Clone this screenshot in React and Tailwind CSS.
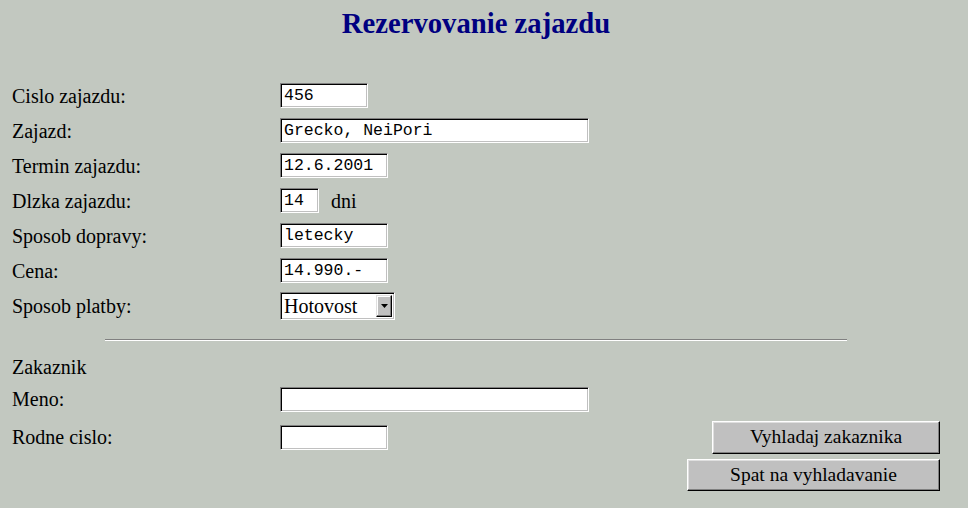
import React from "react";

const serif = { fontFamily: '"Liberation Serif", "Times New Roman", serif' };

function Field({ w, value }) {
  return (
    <div
      className={`${w} h-[25px] bg-white border border-t-[#808080] border-l-[#808080] border-b-white border-r-white shadow-[inset_1px_1px_0_#000,inset_-1px_-1px_0_#c0c0c0] flex items-center pl-[3px] pt-[1px] text-[16.5px] text-black leading-none whitespace-pre overflow-hidden`}
      style={{ fontFamily: '"Liberation Mono", "Courier New", monospace' }}
    >
      {value}
    </div>
  );
}

function Row({ label, children }) {
  return (
    <div className="h-[35px] flex items-center">
      <div className="w-[268px] text-[20px] leading-none">{label}</div>
      {children}
    </div>
  );
}

function Button({ w, h, children }) {
  return (
    <div
      className={`${w} ${h} bg-[#c0c0c0] border border-t-white border-l-white border-b-black border-r-black shadow-[inset_-1px_-1px_0_#808080,inset_1px_1px_0_#dfdfdf] flex items-center justify-center text-[19.5px] leading-none text-black`}
    >
      {children}
    </div>
  );
}

export default function App() {
  return (
    <div className="w-full h-[508px] bg-[#c2c8c0] text-black overflow-hidden" style={serif}>
      <div className="w-[952px] px-3">
        <div className="pt-[8px] text-center text-[28.7px] font-bold text-[#000080] leading-[31px]">
          Rezervovanie zajazdu
        </div>

        <div className="mt-[39px]">
          <Row label="Cislo zajazdu:">
            <Field w="w-[88px]" value="456" />
          </Row>
          <Row label="Zajazd:">
            <Field w="w-[309px]" value="Grecko, NeiPori" />
          </Row>
          <Row label="Termin zajazdu:">
            <Field w="w-[108px]" value="12.6.2001" />
          </Row>
          <Row label="Dlzka zajazdu:">
            <Field w="w-[39px]" value="14" />
            <span className="ml-[12px] text-[20px] leading-none">dni</span>
          </Row>
          <Row label="Sposob dopravy:">
            <Field w="w-[108px]" value="letecky" />
          </Row>
          <Row label="Cena:">
            <Field w="w-[108px]" value="14.990.-" />
          </Row>
          <Row label="Sposob platby:">
            <div className="w-[115px] h-[28px] bg-white border border-t-[#808080] border-l-[#808080] border-b-white border-r-white shadow-[inset_1px_1px_0_#000,inset_-1px_-1px_0_#c0c0c0] flex items-center p-[2px]">
              <span className="flex-1 pl-[1px] text-[20px] leading-none">Hotovost</span>
              <div className="w-[16px] h-[22px] bg-[#c0c0c0] border border-t-[#dfdfdf] border-l-[#dfdfdf] border-b-black border-r-black shadow-[inset_-1px_-1px_0_#808080,inset_1px_1px_0_#fff] flex items-center justify-center">
                <svg width="7" height="4" viewBox="0 0 7 4">
                  <polygon points="0,0 7,0 3.5,4" fill="#000" />
                </svg>
              </div>
            </div>
          </Row>
        </div>

        <div className="mt-[16px] mx-auto w-[742px] h-[2px] border-t border-t-[#808080] border-b border-b-white" />

        <div className="mt-[10px] h-[32px] flex items-center text-[20px] leading-none">Zakaznik</div>
        <div className="h-[32px] flex items-center">
          <div className="w-[268px] text-[20px] leading-none">Meno:</div>
          <Field w="w-[309px]" value="" />
        </div>
        <div className="h-[44px] flex items-center">
          <div className="w-[268px] text-[20px] leading-none">Rodne cislo:</div>
          <Field w="w-[108px]" value="" />
          <div className="ml-auto">
            <Button w="w-[228px]" h="h-[33px]">Vyhladaj zakaznika</Button>
          </div>
        </div>
        <div className="flex justify-end">
          <Button w="w-[253px]" h="h-[32px]">Spat na vyhladavanie</Button>
        </div>
      </div>
    </div>
  );
}
